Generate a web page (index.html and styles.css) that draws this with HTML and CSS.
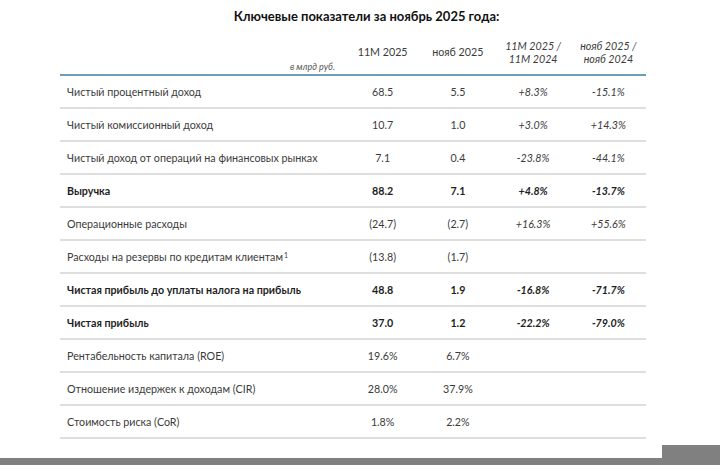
FILE: index.html
```html
<!DOCTYPE html>
<html lang="ru">
<head>
<meta charset="utf-8">
<title>Ключевые показатели</title>
<link rel="stylesheet" href="styles.css">
</head>
<body>
<div class="page">
  <h1 class="title">Ключевые показатели за ноябрь 2025 года:</h1>
  <div class="table">
    <div class="head label-head">в млрд руб.</div>
    <div class="head">11M 2025</div>
    <div class="head">нояб 2025</div>
    <div class="head it">11M 2025 /<br>11M 2024</div>
    <div class="head it">нояб 2025 /<br>нояб 2024</div>

    <div class="cell label">Чистый процентный доход</div>
    <div class="cell">68.5</div><div class="cell">5.5</div><div class="cell it">+8.3%</div><div class="cell it">-15.1%</div>

    <div class="cell label">Чистый комиссионный доход</div>
    <div class="cell">10.7</div><div class="cell">1.0</div><div class="cell it">+3.0%</div><div class="cell it">+14.3%</div>

    <div class="cell label">Чистый доход от операций на финансовых рынках</div>
    <div class="cell">7.1</div><div class="cell">0.4</div><div class="cell it">-23.8%</div><div class="cell it">-44.1%</div>

    <div class="cell label b">Выручка</div>
    <div class="cell b">88.2</div><div class="cell b">7.1</div><div class="cell it b">+4.8%</div><div class="cell it b">-13.7%</div>

    <div class="cell label">Операционные расходы</div>
    <div class="cell">(24.7)</div><div class="cell">(2.7)</div><div class="cell it">+16.3%</div><div class="cell it">+55.6%</div>

    <div class="cell label">Расходы на резервы по кредитам клиентам<sup>1</sup></div>
    <div class="cell">(13.8)</div><div class="cell">(1.7)</div><div class="cell it"></div><div class="cell it"></div>

    <div class="cell label b">Чистая прибыль до уплаты налога на прибыль</div>
    <div class="cell b">48.8</div><div class="cell b">1.9</div><div class="cell it b">-16.8%</div><div class="cell it b">-71.7%</div>

    <div class="cell label b">Чистая прибыль</div>
    <div class="cell b">37.0</div><div class="cell b">1.2</div><div class="cell it b">-22.2%</div><div class="cell it b">-79.0%</div>

    <div class="cell label">Рентабельность капитала (ROE)</div>
    <div class="cell">19.6%</div><div class="cell">6.7%</div><div class="cell"></div><div class="cell"></div>

    <div class="cell label">Отношение издержек к доходам (CIR)</div>
    <div class="cell">28.0%</div><div class="cell">37.9%</div><div class="cell"></div><div class="cell"></div>

    <div class="cell label">Стоимость риска (CoR)</div>
    <div class="cell">1.8%</div><div class="cell">2.2%</div><div class="cell"></div><div class="cell"></div>
  </div>
</div>
<div class="footer">
  <div class="footer-left"></div>
  <div class="footer-right"></div>
</div>
</body>
</html>
```

FILE: styles.css
```css
html, body {
  margin: 0;
  padding: 0;
  background: #ffffff;
}
body {
  width: 720px;
  height: 465px;
  overflow: hidden;
  font-family: Lato, "Noto Sans", sans-serif;
  color: #3b3b3b;
  font-size: 10.7px;
}
.page {
  height: 445px;
}
.title {
  margin: 0;
  padding: 6px 0 0 13px;
  height: 34px;
  box-sizing: border-box;
  text-align: center;
  font-size: 13px;
  line-height: 20px;
  font-weight: 700;
  color: #111;
}
.table {
  margin-left: 60px;
  width: 586px;
  display: grid;
  grid-template-columns: 285px repeat(4, 1fr);
  grid-auto-rows: 33px;
  grid-template-rows: 42px;
}
.head {
  display: flex;
  align-items: center;
  justify-content: center;
  text-align: center;
  line-height: 13.5px;
  padding-bottom: 10px;
  padding-top: 6px;
  border-bottom: 2px solid #6f9db6;
  color: #3b3b3b;
}
.head.label-head {
  justify-content: flex-end;
  align-items: flex-end;
  padding: 0 10px 1px 0;
  font-style: italic;
  font-size: 9px;
  line-height: 12px;
  color: #555;
}
.cell {
  display: flex;
  align-items: center;
  justify-content: center;
  border-bottom: 2px solid #dedede;
  padding-bottom: 1px;
}
.cell.label {
  justify-content: flex-start;
  padding-left: 7px;
}
.it {
  font-style: italic;
}
.b {
  font-weight: 700;
  color: #1e1e1e;
}
sup {
  font-size: 7px;
  line-height: 0;
  position: relative;
  top: -1px;
  vertical-align: super;
  margin-left: 1px;
}
.footer {
  display: flex;
  height: 20px;
}
.footer-left {
  flex: 1;
  background: linear-gradient(to bottom, #ffffff 0, #ffffff 13px, #808080 13px, #808080 100%);
}
.footer-right {
  width: 58px;
  background: #808080;
}
```
